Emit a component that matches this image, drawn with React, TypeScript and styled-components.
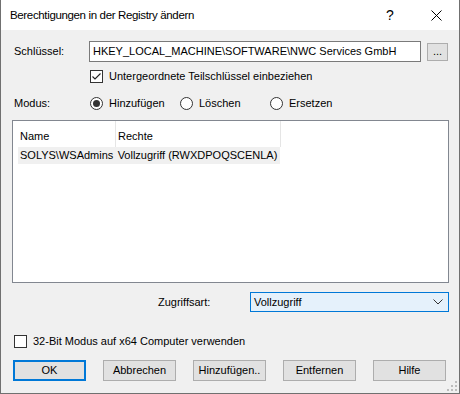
import React, {useState} from 'react';
import styled, {createGlobalStyle} from "styled-components";

const GlobalStyle = createGlobalStyle`
  html, body {
    margin: 0;
    padding: 0;
    background: #f0f0f0;
  }
  * {
    box-sizing: border-box;
  }
`

const Window = styled.div`
  width: 460px;
  height: 394px;
  background: #f0f0f0;
  border-left: 1px solid #707070;
  border-right: 1px solid #707070;
  border-bottom: 1px solid #707070;
  font-family: "Liberation Sans", Arial, sans-serif;
  font-size: 11px;
  line-height: 13px;
  color: #000;
  position: relative;
  display: flex;
  flex-direction: column;
`
const TitleBar = styled.div`
  height: 30px;
  background: #fff;
  display: flex;
  align-items: center;
  padding-left: 9px;
`
const Title = styled.div`
  flex: 1;
  font-size: 11.5px;
  letter-spacing: -0.35px;
`
const TitleButton = styled.div`
  width: 46px;
  height: 30px;
  display: flex;
  align-items: center;
  justify-content: center;
  font-size: 14px;
`
const Body = styled.div`
  flex: 1;
  padding: 11px 10px 0 11px;
  display: flex;
  flex-direction: column;
`
const Row = styled.div<{ $top?: number }>`
  display: flex;
  align-items: center;
  margin-top: ${p => p.$top ?? 0}px;
`
const Label = styled.div<{ $width?: number, $indent?: number }>`
  width: ${p => p.$width ?? 77}px;
  padding-left: ${p => p.$indent ?? 2}px;
  flex-shrink: 0;
`
const TextField = styled.div`
  width: 332px;
  height: 21px;
  border: 1px solid #7a7a7a;
  background: #fff;
  display: flex;
  align-items: center;
  padding-left: 3px;
  white-space: nowrap;
`
const SmallButton = styled.div`
  width: 21px;
  height: 18px;
  margin-left: 6px;
  border: 1px solid #adadad;
  background: #e1e1e1;
  display: flex;
  align-items: flex-end;
  justify-content: center;
  padding-bottom: 3px;
  font-size: 11px;
  line-height: 1;
`
const CheckItem = styled.label<{ $indent?: number }>`
  display: flex;
  align-items: center;
  margin-left: ${p => p.$indent ?? 0}px;
  gap: 6px;
`
const Box = styled.span`
  width: 13px;
  height: 13px;
  border: 1px solid #333;
  background: #fff;
  display: flex;
  align-items: center;
  justify-content: center;
`
const RadioItem = styled.div`
  width: 90px;
  display: flex;
  align-items: center;
  gap: 6px;
`
const RadioCircle = styled.span<{ $checked?: boolean }>`
  width: 13px;
  height: 13px;
  border-radius: 50%;
  border: 1px solid #333;
  background: #fff;
  display: flex;
  align-items: center;
  justify-content: center;
  &::after {
    content: "";
    display: ${p => p.$checked ? "block" : "none"};
    width: 7px;
    height: 7px;
    border-radius: 50%;
    background: #333;
  }
`
const ListBox = styled.div`
  margin-top: 10px;
  width: 437px;
  height: 163px;
  border: 1px solid #828790;
  background: #fff;
  padding: 0 0 0 5px;
`
const HeaderRow = styled.div`
  display: flex;
  height: 26px;
`
const HeaderCell = styled.div<{ $width: number }>`
  width: ${p => p.$width}px;
  border-right: 1px solid #e5e5e5;
  display: flex;
  align-items: flex-end;
  padding: 0 0 4px 2px;
`
const DataRow = styled.div`
  display: flex;
  height: 17px;
  background: #f0f0f0;
  width: 262px;
  align-items: center;
`
const DataCell = styled.div<{ $width: number }>`
  width: ${p => p.$width}px;
  padding-left: 2px;
  white-space: nowrap;
`
const Combo = styled.div`
  width: 200px;
  height: 20px;
  border: 1px solid #0078d7;
  background: #e5f1fb;
  display: flex;
  align-items: center;
  justify-content: space-between;
  padding: 0 5px 0 3px;
`
const ButtonRow = styled.div`
  display: flex;
  gap: 17px;
  margin-top: 12px;
  padding-left: 1px;
`
const Button = styled.div<{ $default?: boolean }>`
  width: 73px;
  height: 21px;
  background: #e1e1e1;
  border: ${p => p.$default ? "2px solid #0078d7" : "1px solid #adadad"};
  display: flex;
  align-items: center;
  justify-content: center;
`
const Grip = styled.svg`
  position: absolute;
  right: 2px;
  bottom: 2px;
`

const Check = () => (
    <svg width="11" height="11" viewBox="0 0 11 11">
        <path d="M1.5 5.5 L4 8 L9.5 2.5" stroke="#222" strokeWidth="1.1" fill="none"/>
    </svg>
)

const modes = ["Hinzufügen", "Löschen", "Ersetzen"]
const buttons = ["OK", "Abbrechen", "Hinzufügen..", "Entfernen", "Hilfe"]

export default function App() {
    const [mode, setMode] = useState<string>("Hinzufügen")

    return (
        <>
            <GlobalStyle/>
            <Window>
                <TitleBar>
                    <Title>Berechtigungen in der Registry ändern</Title>
                    <TitleButton>?</TitleButton>
                    <TitleButton>
                        <svg width="11" height="11" viewBox="0 0 11 11">
                            <path d="M0.5 0.5 L10.5 10.5 M10.5 0.5 L0.5 10.5" stroke="#000" strokeWidth="1"/>
                        </svg>
                    </TitleButton>
                </TitleBar>
                <Body>
                    <Row>
                        <Label>Schlüssel:</Label>
                        <TextField>HKEY_LOCAL_MACHINE\SOFTWARE\NWC Services GmbH</TextField>
                        <SmallButton>...</SmallButton>
                    </Row>
                    <Row $top={8}>
                        <CheckItem $indent={78}>
                            <Box><Check/></Box>
                            Untergeordnete Teilschlüssel einbeziehen
                        </CheckItem>
                    </Row>
                    <Row $top={14}>
                        <Label $width={78}>Modus:</Label>
                        {modes.map(m => (
                            <RadioItem key={m} onClick={() => setMode(m)}>
                                <RadioCircle $checked={mode === m}/>
                                {m}
                            </RadioItem>
                        ))}
                    </Row>
                    <ListBox>
                        <HeaderRow>
                            <HeaderCell $width={98}>Name</HeaderCell>
                            <HeaderCell $width={165}>Rechte</HeaderCell>
                        </HeaderRow>
                        <DataRow>
                            <DataCell $width={98}>SOLYS\WSAdmins</DataCell>
                            <DataCell $width={165}>Vollzugriff (RWXDPOQSCENLA)</DataCell>
                        </DataRow>
                    </ListBox>
                    <Row $top={9}>
                        <Label $width={238} $indent={146}>Zugriffsart:</Label>
                        <Combo>
                            Vollzugriff
                            <svg width="10" height="6" viewBox="0 0 10 6">
                                <path d="M0.5 0.5 L5 5 L9.5 0.5" stroke="#333" strokeWidth="1" fill="none"/>
                            </svg>
                        </Combo>
                    </Row>
                    <Row $top={23}>
                        <CheckItem $indent={2}>
                            <Box/>
                            32-Bit Modus auf x64 Computer verwenden
                        </CheckItem>
                    </Row>
                    <ButtonRow>
                        {buttons.map((b, i) => (
                            <Button key={b} $default={i === 0}>{b}</Button>
                        ))}
                    </ButtonRow>
                </Body>
                <Grip width="10" height="10" viewBox="0 0 10 10">
                    {[[8, 0], [8, 4], [4, 4], [8, 8], [4, 8], [0, 8]].map(([x, y], i) => (
                        <rect key={i} x={x} y={y} width="2" height="2" fill="#bcbcbc"/>
                    ))}
                </Grip>
            </Window>
        </>
    );
}
